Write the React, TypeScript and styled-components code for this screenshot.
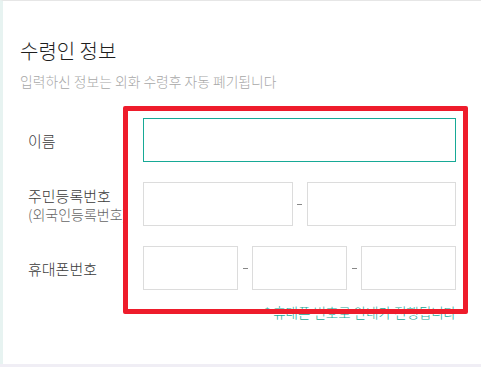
import React, { FC } from 'react';
import styled, { createGlobalStyle } from 'styled-components';

const GlobalStyle = createGlobalStyle`
    * {
        box-sizing: border-box;
    }
    body {
        margin: 0;
        background: #fff;
        font-family: 'Noto Sans CJK KR', 'Noto Sans', sans-serif;
    }
`;

const Page = styled.div`
    position: relative;
    width: 481px;
    height: 367px;
    overflow: hidden;
    background: #f0eef5;
`;

const Card = styled.section`
    height: 364px;
    padding: 36px 0 0 17px;
    background: #fff;
    border-top: 1px solid #e6e6e6;
    border-left: 3px solid #e7f3f1;
`;

const Title = styled.h2`
    margin: 0;
    font-size: 20px;
    font-weight: 300;
    line-height: 28px;
    color: #1e1e1e;
`;

const Subtitle = styled.p`
    margin: 6px 0 0;
    font-size: 13.8px;
    font-weight: 300;
    line-height: 20px;
    color: #a8a8a8;
`;

const Form = styled.div`
    display: flex;
    flex-direction: column;
    gap: 20px;
    margin-top: 27px;
    padding-left: 8px;
`;

const Row = styled.div`
    display: grid;
    grid-template-columns: 115px 313px;
    align-items: center;
`;

const Label = styled.div`
    font-size: 15px;
    font-weight: 300;
    line-height: 19px;
    color: #3a3a3a;
    white-space: nowrap;
    overflow: hidden;
`;

const SubLabel = styled.span`
    display: block;
    font-size: 14px;
    line-height: 18px;
    color: #666;
`;

const Fields = styled.div`
    display: flex;
    align-items: center;
`;

const Input = styled.input<{ $active?: boolean }>`
    flex: 1;
    min-width: 0;
    height: 44px;
    margin: 0;
    padding: 0 10px;
    border: 1px solid ${({ $active }) => ($active ? '#17a996' : '#dcdcdc')};
    outline: none;
    background: #fff;
    font: inherit;
`;

const Dash = styled.span`
    flex: 0 0 14px;
    display: flex;
    justify-content: center;
    &::before {
        content: '';
        width: 5px;
        height: 1px;
        background: #888;
    }
`;

const Notice = styled.p`
    margin: 14px 0 0;
    width: 436px;
    text-align: right;
    font-size: 13.5px;
    font-weight: 300;
    line-height: 16px;
    color: #17a996;
`;

const Highlight = styled.div`
    position: absolute;
    left: 123px;
    top: 106px;
    width: 345px;
    height: 208px;
    border: 5px solid #ee1c2b;
    border-radius: 2px;
    pointer-events: none;
`;

const App: FC = () => (
    <>
        <GlobalStyle />
        <Page>
            <Card>
                <Title>수령인 정보</Title>
                <Subtitle>입력하신 정보는 외화 수령후 자동 폐기됩니다</Subtitle>
                <Form>
                    <Row>
                        <Label>이름</Label>
                        <Fields>
                            <Input $active />
                        </Fields>
                    </Row>
                    <Row>
                        <Label>
                            주민등록번호
                            <SubLabel>(외국인등록번호)</SubLabel>
                        </Label>
                        <Fields>
                            <Input />
                            <Dash />
                            <Input />
                        </Fields>
                    </Row>
                    <Row>
                        <Label>휴대폰번호</Label>
                        <Fields>
                            <Input />
                            <Dash />
                            <Input />
                            <Dash />
                            <Input />
                        </Fields>
                    </Row>
                </Form>
                <Notice>* 휴대폰 번호로 안내가 진행됩니다</Notice>
            </Card>
            <Highlight />
        </Page>
    </>
);

export default App;
